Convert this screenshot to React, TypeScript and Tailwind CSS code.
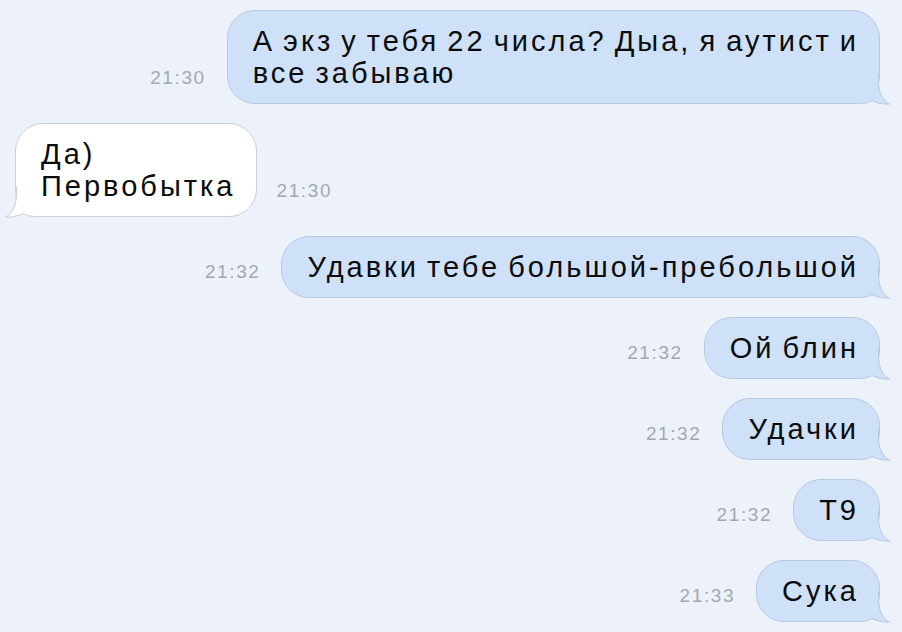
import React from 'react';

type Msg = { out: boolean; lines: string[]; time: string };

const messages: Msg[] = [
  { out: true, lines: ['А экз у тебя 22 числа? Дыа, я аутист и', 'все забываю'], time: '21:30' },
  { out: false, lines: ['Да)', 'Первобытка'], time: '21:30' },
  { out: true, lines: ['Удавки тебе большой-пребольшой'], time: '21:32' },
  { out: true, lines: ['Ой блин'], time: '21:32' },
  { out: true, lines: ['Удачки'], time: '21:32' },
  { out: true, lines: ['T9'], time: '21:32' },
  { out: true, lines: ['Сука'], time: '21:33' },
];

const Tail = ({ out }: { out: boolean }) => {
  const fill = out ? '#cee1f8' : '#ffffff';
  const stroke = out ? '#b6c9e1' : '#c8ced7';
  return (
    <svg
      width="41"
      height="30"
      viewBox="0 0 41 30"
      className={`absolute bottom-[-1px] overflow-visible ${out ? 'right-[-11px]' : 'left-[-11px] -scale-x-100'}`}
    >
      <path d="M0 0 H29.5 V6 C29.5 18 33 26 40.5 30 C34 30.5 28 29 23 26.5 C19 28.8 15 29.5 8 29.5 H0 Z" fill={fill} />
      <path
        d="M29.5 0 V6 C29.5 18 33 26 40.5 30 C34 30.5 28 29 23 26.5 C19 28.8 15 29.5 8 29.5 H0"
        fill="none"
        stroke={stroke}
        strokeWidth="1"
      />
    </svg>
  );
};

const Time = ({ t }: { t: string }) => (
  <span className="mb-[16px] text-[19px] leading-[20px] tracking-[1.6px] text-[#a3a8b0] font-['Liberation_Sans',sans-serif]">
    {t}
  </span>
);

const Bubble = ({ m }: { m: Msg }) => (
  <div
    className={`relative rounded-[28px] border pl-[25px] pr-[20px] py-[14px] ${
      m.out ? 'bg-[#cee1f8] border-[#b6c9e1]' : 'bg-white border-[#c8ced7]'
    }`}
  >
    <Tail out={m.out} />
    <span className="relative block whitespace-nowrap text-[29px] leading-[32px] tracking-[3px] [word-spacing:-3px] text-[#0b0b0b] font-['Liberation_Sans',sans-serif]">
      {m.lines.map((l, i) => (
        <React.Fragment key={i}>
          {i > 0 && <br />}
          {l}
        </React.Fragment>
      ))}
    </span>
  </div>
);

export default function App() {
  return (
    <div className="w-[902px] h-[632px] overflow-hidden bg-[#edf2fa] pt-[10px] pl-[15px] pr-[22px] flex flex-col gap-[19px]">
      {messages.map((m, i) =>
        m.out ? (
          <div key={i} className="flex items-end justify-end gap-[21px]">
            <Time t={m.time} />
            <Bubble m={m} />
          </div>
        ) : (
          <div key={i} className="flex items-end justify-start gap-[20px]">
            <Bubble m={m} />
            <Time t={m.time} />
          </div>
        )
      )}
    </div>
  );
}
